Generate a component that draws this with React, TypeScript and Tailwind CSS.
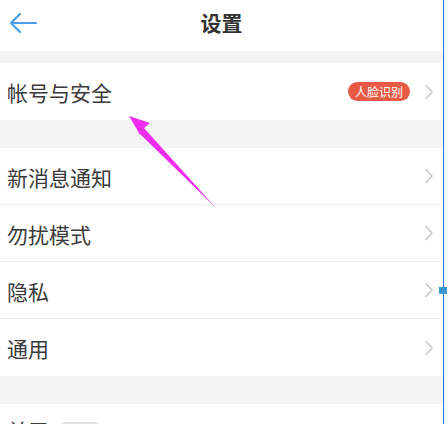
import React from "react";

const Chevron = () => (
  <svg width="10" height="16" viewBox="0 0 10 16" className="shrink-0">
    <path d="M2 1.5 L8 8 L2 14.5" fill="none" stroke="#c9c9c9" strokeWidth="1.6" strokeLinecap="round" strokeLinejoin="round" />
  </svg>
);

const Row = ({ label, badge, divider }: { label: string; badge?: string; divider?: boolean }) => (
  <div className={`flex h-[57px] shrink-0 items-center bg-white pl-[7px] pr-[9px] ${divider ? "border-b border-[#eeeeee]" : ""}`}>
    <span className="flex-1 pt-[2px] text-[21px] leading-none text-[#3a3a3a]">{label}</span>
    {badge && (
      <span className="mr-[14px] flex h-[19px] w-[62px] items-center justify-center rounded-full bg-[#e85a45] text-[12px] leading-none text-white">
        {badge}
      </span>
    )}
    <Chevron />
  </div>
);

export default function App() {
  return (
    <div
      className="relative flex h-[424px] w-[448px] overflow-hidden bg-white"
      style={{ fontFamily: '"Noto Sans CJK SC", "Noto Sans", sans-serif' }}
    >
      <div className="flex w-[443px] shrink-0 flex-col bg-[#f4f4f4]">
        <div className="relative flex h-[51px] shrink-0 items-center justify-center bg-white">
          <svg className="absolute left-[8px] top-[11px]" width="30" height="24" viewBox="0 0 30 24">
            <path d="M28 12 H3 M12 3 L3 12 L12 21" fill="none" stroke="#4a9ee6" strokeWidth="2.2" strokeLinecap="round" strokeLinejoin="round" />
          </svg>
          <span className="-mt-[6px] text-[21px] font-bold leading-none text-[#333333]">设置</span>
        </div>
        <div className="h-[12px] shrink-0" />
        <Row label="帐号与安全" badge="人脸识别" />
        <div className="h-[28px] shrink-0" />
        <Row label="新消息通知" divider />
        <Row label="勿扰模式" divider />
        <Row label="隐私" divider />
        <Row label="通用" />
        <div className="h-[28px] shrink-0" />
        <div className="flex h-[57px] shrink-0 items-start bg-white pl-[7px] pr-[9px] pt-[16px]">
          <span className="text-[21px] leading-none text-[#3a3a3a]">关于</span>
          <span className="ml-[12px] mt-[2px] h-[20px] w-[38px] rounded bg-[#e2e2e2]" />
          <span className="ml-auto mr-[12px] text-[19px] leading-none text-[#9a9a9a]">8.2.0</span>
        </div>
      </div>
      <div className="w-[1px] shrink-0 bg-[#3b6fd8]" />
      <div className="absolute left-[439px] top-[287px] h-[7px] w-[8px] bg-[#3a97d0]" />
      <svg className="absolute left-0 top-0" width="448" height="424" viewBox="0 0 448 424">
        <path d="M129 116 L150 123 L144 128 L216 208 L138 132 L142 138 Z" fill="#ee2df0" />
      </svg>
    </div>
  );
}
